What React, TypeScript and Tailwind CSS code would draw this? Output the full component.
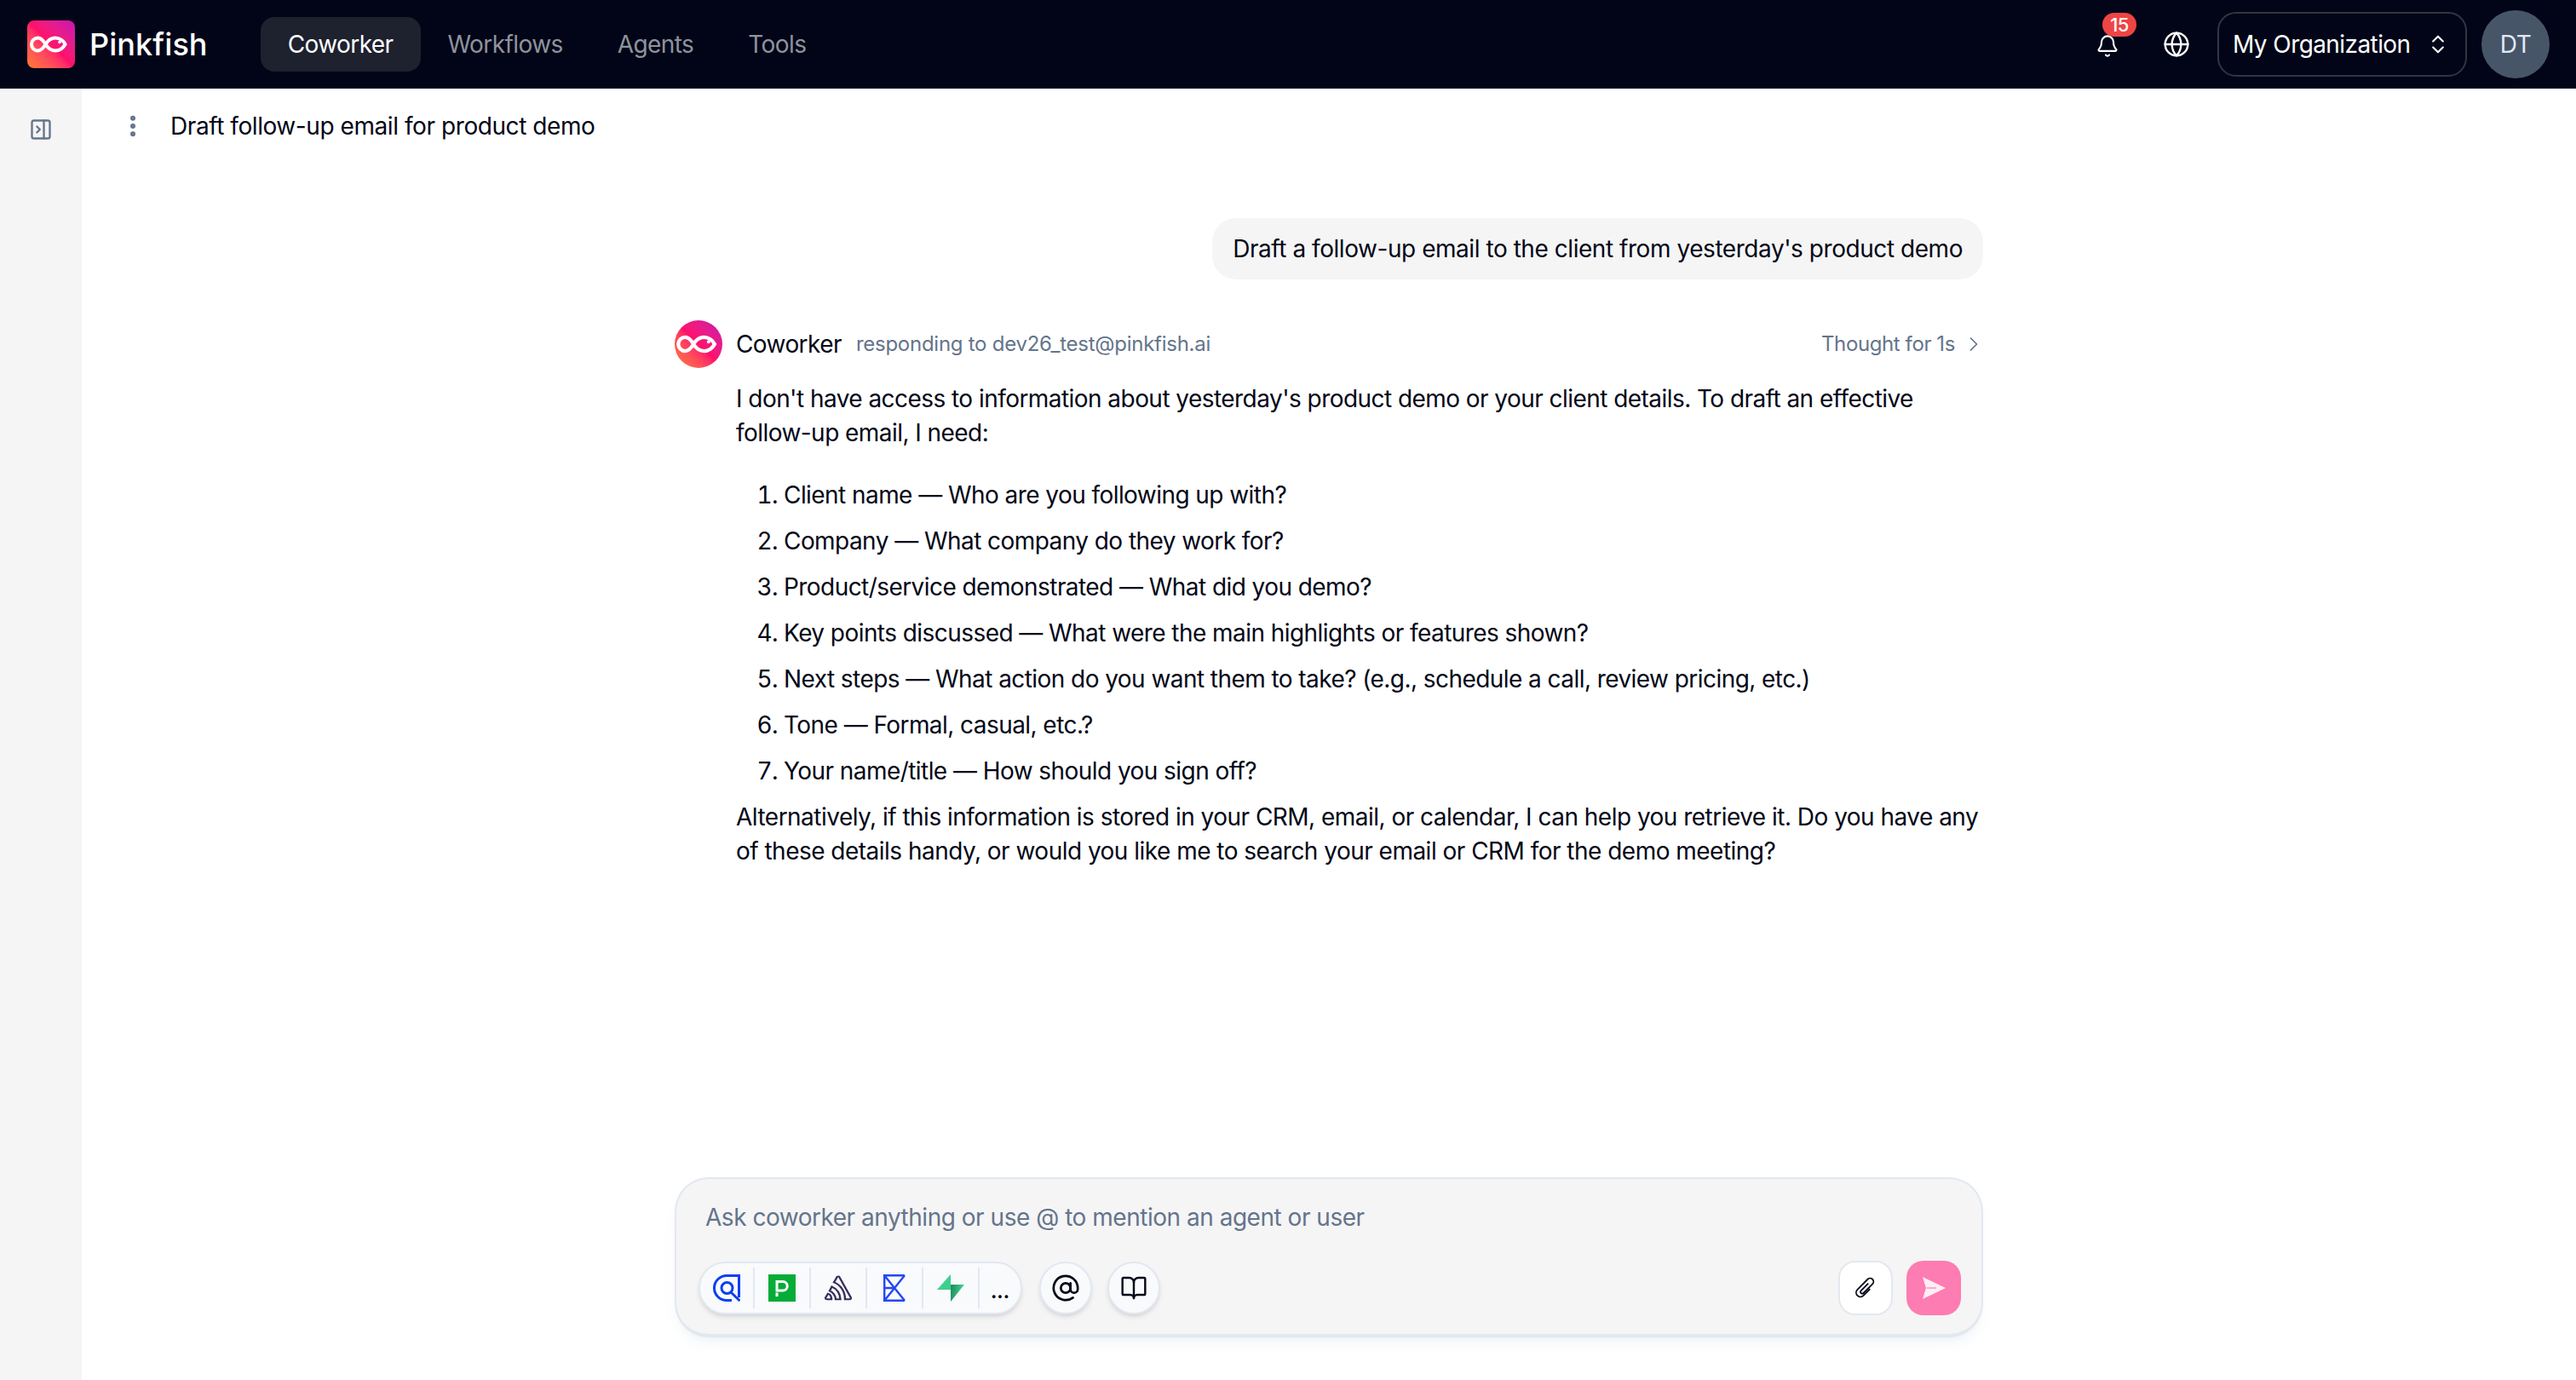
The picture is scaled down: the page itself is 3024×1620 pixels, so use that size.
import { AtSign, BookOpen, ChevronRight, ChevronsUpDown, EllipsisVertical, Globe, Bell, PanelRightClose } from "lucide-react";
import type { ReactNode } from "react";

function LogoMark({ box }: { box: string }) {
  return (
    <svg viewBox={box} className="w-full h-full">
      <path
        d="M21.500 28C18.500 23 15.500 20.500 12.500 20.500A7.500 7.500 0 0 0 12.500 35.500C15.500 35.500 18.500 33 21.500 28C24.500 23 28 20.500 33 20.500C38 20.500 42.500 24 44.500 28C42.500 32 38 35.500 33 35.500C28 35.500 24.500 33 21.500 28Z"
        fill="none"
        stroke="#fff"
        strokeWidth="4"
      />
      <circle cx="38" cy="25.500" r="1.800" fill="#fff" />
    </svg>
  );
}

function NavItem({ label, active }: { label: string; active?: boolean }) {
  return (
    <div className={active ? "h-16 px-8 rounded-2xl bg-[#1e212e] text-white flex items-center" : "h-16 px-8 rounded-2xl text-[#8f939c] flex items-center"}>
      {label}
    </div>
  );
}

function Header() {
  return (
    <header className="h-[104px] shrink-0 bg-[#020518] flex items-center pl-8 pr-[31px] text-[28px]">
      <div className="w-14 h-14 rounded-lg bg-gradient-to-tr from-[#ff7a2f] via-[#ff0f6b] to-[#c80fb0] overflow-hidden">
        <LogoMark box="0 0 56 56" />
      </div>
      <div className="ml-[17px] text-[36px] font-medium text-white tracking-[0.1px]">Pinkfish</div>
      <nav className="ml-[62px] flex items-center">
        <NavItem label="Coworker" active />
        <NavItem label="Workflows" />
        <NavItem label="Agents" />
        <NavItem label="Tools" />
      </nav>
      <div className="ml-auto flex items-center">
        <div className="relative w-8 h-8 flex items-center justify-center mr-[49px] mt-[3px]">
          <Bell className="w-7 h-7 text-white" strokeWidth={1.8} />
          <div className="absolute -top-[23px] left-[10px] h-7 w-10 rounded-full bg-[#ef4444] text-white text-[22px] leading-7 font-medium text-center">15</div>
        </div>
        <Globe className="w-8 h-8 text-white mr-[32px]" strokeWidth={1.8} />
        <div className="w-[293px] h-[76px] rounded-[22px] border-2 border-[#33353f] flex items-center pl-4 text-white">
          My Organization
          <ChevronsUpDown className="w-7 h-7 ml-[18px] text-white" strokeWidth={1.8} />
        </div>
        <div className="ml-[17px] w-20 h-20 rounded-full bg-[#475569] text-[#e2e8f0] flex items-center justify-center">DT</div>
      </div>
    </header>
  );
}

function ToolIcon({ children, first }: { children: ReactNode; first?: boolean }) {
  return (
    <div className={first ? "w-[64px] h-12 flex items-center justify-center border-r-2 border-[#e2e8f0]" : "w-[66px] h-12 flex items-center justify-center border-r-2 border-[#e2e8f0]"}>
      {children}
    </div>
  );
}

const items: [string, string][] = [
  ["Client name", "Who are you following up with?"],
  ["Company", "What company do they work for?"],
  ["Product/service demonstrated", "What did you demo?"],
  ["Key points discussed", "What were the main highlights or features shown?"],
  ["Next steps", "What action do you want them to take? (e.g., schedule a call, review pricing, etc.)"],
  ["Tone", "Formal, casual, etc.?"],
  ["Your name/title", "How should you sign off?"],
];

export default function App() {
  return (
    <div className="w-[3024px] h-[1620px] flex flex-col bg-white text-[28px] tracking-[-0.58px] text-[#0f172a] overflow-hidden" style={{ fontFamily: "Inter, 'Liberation Sans', sans-serif" }}>
      <Header />
      <div className="flex-1 flex min-h-0">
        <aside className="w-24 shrink-0 bg-[#f5f5f5] pt-[34px] pl-[34px]">
          <PanelRightClose className="w-7 h-7 text-[#64748b]" strokeWidth={2} />
        </aside>
        <main className="flex-1 flex flex-col min-w-0">
          <div className="h-[88px] flex items-center pl-[44px]">
            <EllipsisVertical className="w-8 h-8 text-[#64748b]" strokeWidth={2.5} />
            <div className="ml-[28px] text-[#020617] tracking-[-0.43px]">Draft follow-up email for product demo</div>
          </div>
          <div className="flex-1 w-[1536px] mx-auto flex flex-col">
            <div className="mt-[64px] self-end h-[72px] px-6 rounded-[28px] bg-[#f5f5f5] flex items-center text-[#020617] tracking-[-0.45px]">
              Draft a follow-up email to the client from yesterday's product demo
            </div>
            <div className="mt-12 flex items-center h-14">
              <div className="w-14 h-14 rounded-full bg-gradient-to-tr from-[#ff7a2f] via-[#ff0f6b] to-[#c80fb0] overflow-hidden">
                <LogoMark box="1 2 52 52" />
              </div>
              <div className="ml-4 text-[#020617]">Coworker</div>
              <div className="ml-[17px] text-2xl tracking-[-0.26px] text-[#64748b]">responding to dev26_test@pinkfish.ai</div>
              <div className="ml-auto text-2xl tracking-[-0.4px] text-[#64748b] flex items-center">
                Thought for 1s
                <ChevronRight className="w-7 h-7 ml-2 -mr-[3px]" strokeWidth={1.5} />
              </div>
            </div>
            <div className="pl-[72px] mt-4 text-[#020617] leading-[40px]">
              <p className="tracking-[-0.55px]">I don't have access to information about yesterday's product demo or your client details. To draft an effective follow-up email, I need:</p>
              <ol className="mt-[33px] mb-[14px] list-decimal pl-[56px] flex flex-col gap-[14px] tracking-[-0.56px]">
                {items.map(([a, b]) => (
                  <li key={a}>{a} — {b}</li>
                ))}
              </ol>
              <p className="tracking-[-0.52px]">Alternatively, if this information is stored in your CRM, email, or calendar, I can help you retrieve it. Do you have any of these details handy, or would you like me to search your email or CRM for the demo meeting?</p>
            </div>
            <div className="mt-auto mb-[50px] h-[188px] rounded-[40px] bg-[#f5f5f5] border-2 border-[#e2e8f0] border-b-4 shadow-lg shadow-slate-200/40 pl-[26px] pr-6 flex flex-col">
              <div className="mt-[25px] pl-2 text-[#64748b] leading-[40px] tracking-[-0.48px]">Ask coworker anything or use @ to mention an agent or user</div>
              <div className="mt-[31px] flex items-center">
                <div className="h-[62px] w-[380px] rounded-full bg-[#f8fafc] border-2 border-[#e2e8f0] shadow-md flex items-center">
                  <ToolIcon first>
                    <svg viewBox="0 0 32 32" className="w-8 h-8 ml-[-1px]" fill="none" stroke="#0b3ff0" strokeWidth="3">
                      <path d="M30.500 27V1.500H16A14.500 14.500 0 1 0 16 30.500H22" />
                      <circle cx="16.500" cy="16" r="6.500" />
                      <path d="M21 21L31.500 31" />
                    </svg>
                  </ToolIcon>
                  <ToolIcon>
                    <svg viewBox="0 0 32 32" className="w-8 h-8">
                      <rect width="32" height="32" fill="#06ac38" />
                      <path d="M10 19V8.500H17A5.250 5.250 0 0 1 17 19Z" fill="none" stroke="#fff" strokeWidth="3" />
                      <rect x="8.500" y="21.500" width="3" height="4.500" fill="#fff" />
                    </svg>
                  </ToolIcon>
                  <ToolIcon>
                    <svg viewBox="0 0 32 36" preserveAspectRatio="none" className="w-8 h-[30px]" fill="none" stroke="#362d59" strokeWidth="2.400">
                      <path d="M17 2 L31 32 A2 2 0 0 1 29 34 H24 C24 22 18 13 11 10 L14 4 A2 2 0 0 1 17 2 Z" />
                      <path d="M8.500 16 C14 19 18 25 18.500 34 H13 C13 29 10 24 6 22 Z" />
                      <path d="M4 26 C7 27 8 31 8 34 H3 A2 2 0 0 1 1 32 Z" />
                    </svg>
                  </ToolIcon>
                  <ToolIcon>
                    <svg viewBox="0 0 26 32" className="w-[26px] h-8" fill="none" stroke="#2447f0" strokeWidth="2.400">
                      <path d="M25 1.200H1.200V30.800H25M1.200 1.200L25 30.800M25 1.200L1.200 30.800M1.200 16H13" />
                    </svg>
                  </ToolIcon>
                  <ToolIcon>
                    <svg viewBox="0 0 32 32" className="w-8 h-8">
                      <defs>
                        <linearGradient id="boltG" x1="0.100" y1="0.300" x2="0.800" y2="0.500">
                          <stop offset="0" stopColor="#249361" />
                          <stop offset="1" stopColor="#3ecf8e" />
                        </linearGradient>
                      </defs>
                      <path d="M16 0V18H0Z" fill="#3ecf8e" />
                      <path d="M16 12H32L16 32Z" fill="url(#boltG)" />
                    </svg>
                  </ToolIcon>
                  <div className="flex-1 text-center font-bold text-[22px] text-[#020617] leading-none mt-2 tracking-normal">...</div>
                </div>
                <div className="ml-[20px] w-[62px] h-[62px] rounded-full bg-[#f8fafc] border-2 border-[#e2e8f0] shadow-md flex items-center justify-center">
                  <AtSign className="w-[34px] h-[34px] text-[#020617]" strokeWidth={1.9} />
                </div>
                <div className="ml-[18px] w-[62px] h-[62px] rounded-full bg-[#f8fafc] border-2 border-[#e2e8f0] shadow-md flex items-center justify-center">
                  <BookOpen className="w-8 h-8 text-[#020617]" strokeWidth={1.8} />
                </div>
                <div className="ml-auto w-[64px] h-[64px] rounded-[20px] bg-white border-2 border-[#e2e8f0] flex items-center justify-center">
                  <svg viewBox="-14 -14 28 28" className="w-7 h-7" fill="none" stroke="#020617" strokeWidth="1.800">
                    <g transform="rotate(45)">
                      <path d="M-1.500 -6V6A2 2 0 0 0 2.500 6V-9A4 4 0 0 0 -5.500 -9V8A5 5 0 0 0 4.500 8V-3" />
                    </g>
                  </svg>
                </div>
                <div className="ml-4 w-[64px] h-[64px] rounded-[20px] bg-[#fd7cb1] flex items-center justify-center">
                  <svg viewBox="0 0 28 28" className="w-7 h-7">
                    <path d="M1 1L28 14L1 27L5 14Z" fill="#fdeef5" />
                    <path d="M6 14H17" stroke="#fd7cb1" strokeWidth="1.200" />
                  </svg>
                </div>
              </div>
            </div>
          </div>
        </main>
      </div>
    </div>
  );
}
